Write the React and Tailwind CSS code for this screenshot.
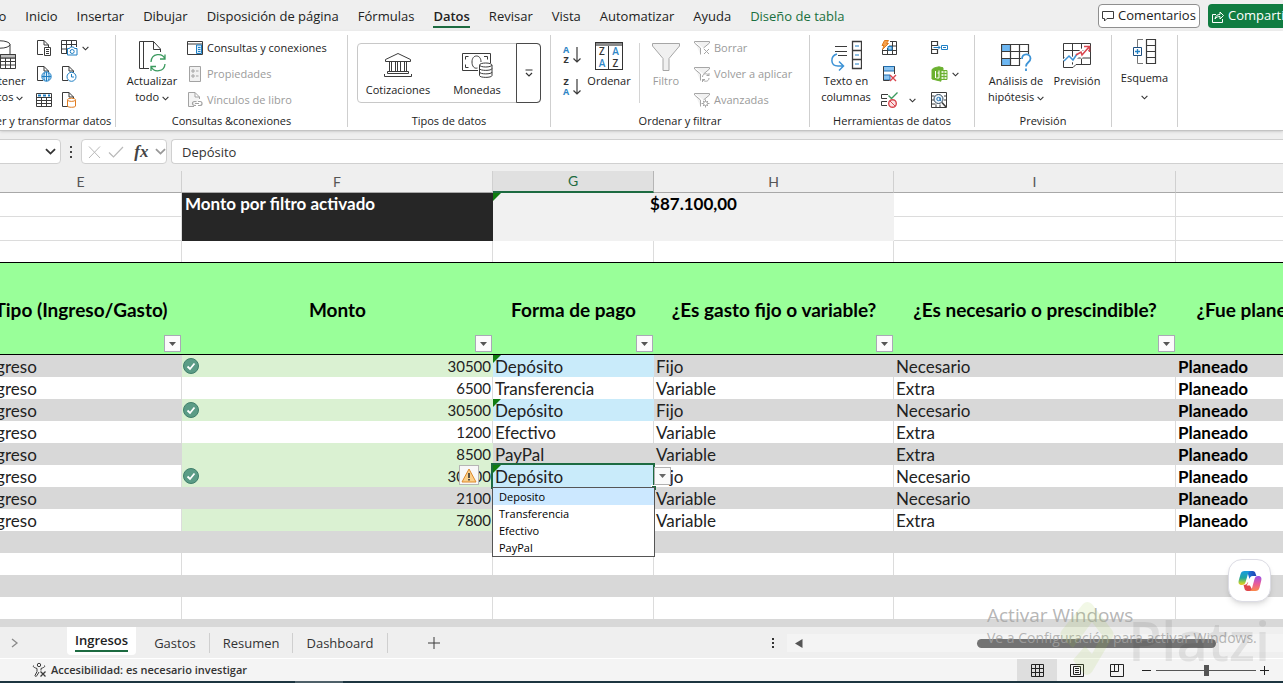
import React, { useState } from "react";

const UI = "font-['Open_Sans','Noto_Sans',sans-serif]";
const SHEET = "font-['Lato','Open_Sans',sans-serif]";

const MENU = ["Archivo", "Inicio", "Insertar", "Dibujar", "Disposición de página", "Fórmulas", "Datos", "Revisar", "Vista", "Automatizar", "Ayuda", "Diseño de tabla"];

const ROWS = [
  { monto: "30500", forma: "Depósito",      fijo: "Fijo",     need: "Necesario", ok: true },
  { monto: "6500",  forma: "Transferencia", fijo: "Variable", need: "Extra" },
  { monto: "30500", forma: "Depósito",      fijo: "Fijo",     need: "Necesario", ok: true },
  { monto: "1200",  forma: "Efectivo",      fijo: "Variable", need: "Extra" },
  { monto: "8500",  forma: "PayPal",        fijo: "Variable", need: "Extra" },
  { monto: "30500", forma: "Depósito",      fijo: "Fijo",     need: "Necesario", ok: true, selected: true },
  { monto: "2100",  forma: "",              fijo: "Variable", need: "Necesario" },
  { monto: "7800",  forma: "",              fijo: "Variable", need: "Extra" },
];

const HEADERS = ["Tipo (Ingreso/Gasto)", "Monto", "Forma de pago", "¿Es gasto fijo o variable?", "¿Es necesario o prescindible?", "¿Fue planeado o imprevisto?"];

/* ── Icons ── */

const Svg = ({ w = 16, h = 16, children }) => (
  <svg width={w} height={h} viewBox={`0 0 ${w} ${h}`} fill="none" stroke="#3b3b3b" className="shrink-0" aria-hidden="true">{children}</svg>
);

const Chevron = ({ w = 7, color = "#333" }) => (
  <svg width={w} height={w} viewBox="0 0 8 8" fill="none" stroke={color} strokeWidth="1.3" className="inline-block shrink-0" aria-hidden="true">
    <path d="M0.7 2.2 4 5.5 7.3 2.2" />
  </svg>
);

const PAGE = "M7 14.5H1.5V.5H8L12.5 5V7M8 .5V5H12.5";

const Ico = {
  database: (
    <Svg w={32} h={32}>
      <ellipse cx="12" cy="4.5" rx="10" ry="3.7" />
      <path d="M2 4.500V24c0 2 4 3.500 9 3.500M22 4.500V14" />
      <path d="M12.500 14.500h15v14h-15z" fill="#fff" />
      <path d="M12.500 18h15M12.500 21.500h15M12.500 25h15M17.500 18v10.500M22.500 18v10.500" />
      <path d="M12.500 14.500h15v3.500h-15z" fill="#bdbdbd" />
    </Svg>
  ),
  pageText: <Svg><path d={PAGE} /><path d="M8.500 7.500h6v8h-6z" fill="#fff" /><path d="M10 9.500h3M10 11.500h3M10 13.500h3" /></Svg>,
  pageWeb: (
    <Svg><path d={PAGE} /><circle cx="10.500" cy="10.500" r="4.700" fill="#d5ebfa" stroke="#1f7fc4" /><path stroke="#1f7fc4" d="M6 10.500h9M10.500 6v9.200M8.500 6.800c-.8 2.500-.8 5 0 7.500M12.500 6.800c.8 2.500.8 5 0 7.500" /></Svg>
  ),
  tableBlue: (
    <Svg><path d="M.5 1.500h15v13H.5zM.5 5.500h15M.5 8.500h15M.5 11.500h15M5.500 5.500v9M10.500 5.500v9" /><path stroke="#1f7fc4" strokeWidth="2" strokeDasharray="3 2" d="M2 3.500h12" /></Svg>
  ),
  camera: (
    <Svg w={17}>
      <path d="M6 13.500H.5v-13h15V7M.5 4.500h15M.5 9h5.500M5.500.5v13M10.500.5V7" />
      <path d="M6.500 8.500h2l1-1.500h3l1 1.500h2.500v6.500h-9.500z" fill="#fff" stroke="#1f7fc4" /><circle cx="11.200" cy="11.500" r="2" stroke="#1f7fc4" />
    </Svg>
  ),
  pageClock: <Svg><path d={PAGE} /><circle cx="10.500" cy="10.800" r="4.500" fill="#fff" stroke="#1f7fc4" /><path stroke="#1f7fc4" d="M10.500 8v3h2.500" /></Svg>,
  pageDb: (
    <Svg><path d={PAGE} /><path d="M6.500 8v6c0 1.700 8 1.700 8 0V8" fill="#fff" stroke="#e07b1d" /><ellipse cx="10.500" cy="7.800" rx="4" ry="1.600" fill="#fff" stroke="#e07b1d" /></Svg>
  ),
  refresh: (
    <Svg w={28} h={32}>
      <path d="M6 28.500H1.500V1.500H14" /><path d="M11 28.500H5.500V1.500H15.500L22.500 9V12M15.500 1.500V9.500H22.500" />
      <path stroke="#3c9a5f" strokeWidth="1.300" d="M13 22c.5-9 11.500-9.500 14-3M27 14.500v4.500h-5M27 24c-.5 8-11 9-14 2.500M13 31v-4.500h5" />
    </Svg>
  ),
  queries: (
    <Svg><path d="M.5 1.500h15v13H.5zM.5 4h15" /><path stroke="#1f7fc4" d="M9.500 5v8.500h5V5z" fill="#d5ebfa" /><path stroke="#1f7fc4" d="M11 7.500h2.500M11 9.500h2.500M11 11.500h2.500" /></Svg>
  ),
  props: <Svg><g stroke="#a3a3a3"><path d="M2.500.5h11v15h-11z" fill="#f1f1f1" /><path d="M5 4h2v2H5zM5 9h2v2H5zM9 5h2.500M9 10h2.500" /></g></Svg>,
  link: (
    <Svg><g stroke="#a3a3a3"><path d={PAGE} fill="#f4f4f4" /><path d="M5.500 11.500a2 2 0 0 1 2-2h2M9 13.500H7.500a2 2 0 0 1-2-2M11 9.500h2a2 2 0 0 1 0 4h-2M8 11.500h4" strokeWidth="1.200" /></g></Svg>
  ),
  bank: (
    <Svg w={28} h={26}>
      <path d="M1.500 7.500 14 1.500l12.500 6v2h-25zM3.500 21.500h21v-2h-21zM.5 24.500h27v-2.500M.5 24.500v-2.500" />
      <path d="M5.500 9.500v10M7.500 9.500v10M11.500 9.500v10M13.500 9.500v10M16.500 9.500v10M20.500 9.500v10M22.500 9.500v10" />
    </Svg>
  ),
  coins: (
    <Svg w={31} h={26}>
      <path d="M16 18.500H.5v-17h28V11M3.500 15.500v-3M3.500 7.500v-3h3M3.500 15.500h3M22 4.500h3.500v3" />
      <path d="M15.500 16c-3.500 1-5.500-2-5.500-6s2-6 4.500-6 4.500 2 4.500 6" />
      <path d="M17.500 13v10.500c0 2.500 12.500 2.500 12.500 0V13" fill="#fff" /><ellipse cx="23.700" cy="13" rx="6.200" ry="2" fill="#fff" />
      <path d="M17.500 16.500c0 2.500 12.500 2.500 12.500 0M17.500 20c0 2.500 12.500 2.500 12.500 0" />
    </Svg>
  ),
  filter: <Svg w={28} h={29}><path stroke="#a6a6a6" fill="#f0f0f0" d="M.5 1.500h27V4L17 16.500v12h-6v-12L.5 4z" /></Svg>,
  textCols: (
    <Svg w={32} h={32}>
      <path d="M5 6.500h12M5 11.500h12M8 15.500h9" /><path d="M22.500 1.500h9v27h-9zM22.500 10.500h9M22.500 19.500h9" strokeWidth="1.300" />
      <path stroke="#1f7fc4" d="M25 6h4M25 15h4M25 24h4" /><path stroke="#3d93d6" strokeWidth="1.500" d="M7 14c-7 2-7 12 1 12h5M9 21.500l4.500 4.500L9 30.500" />
    </Svg>
  ),
  flash: (
    <Svg><path d="M1.500 9v5.500h14V1.500H9M1.500 10.500h14M6.500 8v6.500M11.500 1.500v13M8 6h7.500" /><path fill="#9ccbf0" stroke="#1f7fc4" d="M7 6.500h4v3.500H7z" /><path fill="#f5a04c" stroke="#e07b1d" d="M3.500.5h4L5.500 3.500h2L1.500 9.500 3 5.500H1z" /></Svg>
  ),
  removeDup: (
    <Svg><path fill="#8cc5f2" stroke="#1f6fb2" d="M2.500.5h11v4.500h-11zM2.500 9h6.500v5h-6.500z" /><path d="M2.500.5v14h6M13.500.5V8" /><path stroke="#d9464f" strokeWidth="1.400" d="M9 9l6 6M15 9l-6 6" /></Svg>
  ),
  validate: (
    <Svg w={17}><path d="M7 2.500H.5v4H6M6 9.500H.5v4H6" /><path stroke="#3c9a5f" strokeWidth="1.400" d="M7.500 3.500l3 3 6-6" /><circle cx="11.500" cy="11.500" r="3.800" stroke="#d9464f" strokeWidth="1.400" fill="#fbe3e4" /><path stroke="#d9464f" d="M9 9l5 5" /></Svg>
  ),
  consolidate: (
    <Svg w={17}><path d="M.5 1.500h6v4h-6zM.5 9.500h6v4h-6zM.5 5.500v4" strokeWidth="1.200" /><path stroke="#1f7fc4" d="M2.500 7.500H9M7 5.500l2 2-2 2M10.500 5.500h6v4h-6zM12 7.500h3" /></Svg>
  ),
  model: (
    <Svg w={17}><path fill="#6bb130" stroke="#6bb130" d="M1 4Q1 2 8 .8l4 1V4L10 5v10.200L1 13z" /><path stroke="#fff" d="M4.500 5v7M8 4.500v7.500H5.500M6.500 7H8" /><path fill="#dff0d0" stroke="#6bb130" d="M10 4.500h6v9h-6zM10 7.500h6M10 10.500h6M13 4.500v9" /></Svg>
  ),
  dataSearch: (
    <Svg><path d="M.5.5h15v15H.5zM.5 4h3M.5 8h2.500M.5 12h4M5 12.500v3M9 12.500v3M13 4h2.500M13 8h2.500" /><circle cx="7.500" cy="7" r="4.500" fill="#eaf4fc" stroke="#33475b" /><circle cx="7.500" cy="7" r="1.700" stroke="#1f6fb2" /><path stroke="#1f6fb2" d="M9.200 5.500v3h1" /><path strokeWidth="1.500" d="M11 10.500l4 4.500" /></Svg>
  ),
  whatIf: (
    <Svg w={31} h={32}>
      <path fill="#6db7f2" stroke="none" d="M1 4h9v7H1zM1 18h9v7H1z" /><path d="M19 25.500H.5v-21h27V14M.5 11.500h27M.5 18.500H20M9.500 4.500v21M18.500 4.500v21" strokeWidth="1.200" />
      <path d="M20 15h10v17H20z" fill="#fff" stroke="none" /><path stroke="#3d93d6" strokeWidth="1.800" d="M21 19c0-6 8.500-6 8.500-.5 0 4-4.500 3.500-4.500 8M25 28.500v2.500" />
    </Svg>
  ),
  forecast: (
    <Svg w={29} h={28}>
      <path d="M7 25.500H.5V1.500h27v21H13l-3 3H6M.5 8.500h27M.5 16h27M9.500 1.500v21M18.500 1.500v21" />
      <path stroke="#fff" strokeWidth="4" d="M1 19l5-5 4 4 8-8 1 3 6-7" />
      <path stroke="#3d93d6" strokeWidth="1.500" d="M1 19l5-5 4 4 4-6" /><path stroke="#d9464f" strokeWidth="1.500" d="M13 13l5-3 1 3 7-8M21 4.500h5.500V10" />
    </Svg>
  ),
  outline: (
    <Svg w={25} h={27}>
      <path d="M14.500 1.500h9v24h-9zM14.500 7.500h9M14.500 13.500h9M14.500 19.500h9" strokeWidth="1.200" /><path stroke="#777" d="M11 1.500H5.500v8M5.500 17.500v8H11" />
      <path stroke="#1f4f7f" d="M1.500 9.500h8v8h-8z" /><path stroke="#1f7fc4" strokeWidth="1.300" d="M5.500 11v5M3 13.500h5" />
    </Svg>
  ),
};

const SmallFilter = ({ children }) => (
  <Svg><g stroke="#a6a6a6"><path fill="#f1f1f1" d="M.5 1.500h15V3L9.500 8M6.500 14.500V8L.5 3V1.500" />{children}</g></Svg>
);

const Check = () => (
  <svg width="16" height="16" viewBox="0 0 16 16" fill="none" aria-hidden="true">
    <circle cx="8" cy="8" r="7.500" fill="#5b9c86" stroke="#3f7f6b" />
    <path d="M4.500 8.500 7 11l4.500-5.500" stroke="#fff" strokeWidth="1.800" />
  </svg>
);

const Copilot = () => (
  <svg width="24" height="22" viewBox="0 0 24 22" aria-hidden="true">
    <defs>
      <linearGradient id="cpA" x1="0" y1="0" x2="0" y2="1"><stop offset="0" stopColor="#1a9be0" /><stop offset=".5" stopColor="#22a6a0" /><stop offset=".85" stopColor="#b5cf2f" /><stop offset="1" stopColor="#f2c52c" /></linearGradient>
      <linearGradient id="cpB" x1="0" y1="0" x2="0" y2="1"><stop offset="0" stopColor="#9a55e8" /><stop offset=".5" stopColor="#e75a9c" /><stop offset="1" stopColor="#fb8a4b" /></linearGradient>
      <linearGradient id="cpC" x1="0" y1="0" x2="1" y2="0"><stop offset="0" stopColor="#1f7de0" /><stop offset="1" stopColor="#1b3fae" /></linearGradient>
    </defs>
    <path fill="url(#cpC)" d="M9 1h5.500c2 0 2.600 1 3.100 2.700L18.400 6H15c-2 0-3 1-3.500 3z" />
    <path fill="url(#cpA)" d="M6.500 1H13c-2 0-2.600 1.500-3.200 3.500L7.600 12c-.6 2-1.500 3-3.600 3-3 0-4-1.700-3.200-4.800l1.700-6C3.200 2 4.300 1 6.500 1z" />
    <path fill="#e0484d" d="M15 21H9.500c-2 0-2.600-1-3.100-2.700L5.600 15C8 15 9 14 10 12z" />
    <path fill="url(#cpB)" d="M17.500 21H11c2 0 2.600-1.500 3.200-3.500L16.400 9.500c.6-2.500 1.500-3.500 3.600-3.500 3 0 4 1.700 3.200 4.800l-1.700 7c-.7 2.200-1.800 3.200-4 3.200z" />
    <path fill="#fff" d="M13.500 6.500h2.800L11.800 15.500H8.600z" />
  </svg>
);

/* ── Ribbon parts ── */

const Group = ({ label, className, children }) => (
  <section className={`flex h-[92px] shrink-0 flex-col border-r border-[#cfcfcf] ${className}`}>
    <div className="flex h-[78px] shrink-0">{children}</div>
    <div className="whitespace-nowrap text-center text-[11px] leading-4 text-[#222]">{label}</div>
  </section>
);

const Big = ({ icon, lines, chevron, disabled, className }) => (
  <button disabled={disabled} className={`flex shrink-0 flex-col items-center pt-1 text-[11px] leading-4 ${disabled ? "text-[#9b9b9b]" : "text-[#222]"} ${className}`}>
    <span className="flex h-[34px] items-center">{icon}</span>
    {lines.map((l, i) => (
      <span key={l} className="whitespace-nowrap">{l}{chevron && i === lines.length - 1 && <> <Chevron /></>}</span>
    ))}
  </button>
);

const Small = ({ icon, text, disabled }) => (
  <button disabled={disabled} className={`flex h-[26px] items-center gap-1 whitespace-nowrap text-[11px] ${disabled ? "text-[#9b9b9b]" : "text-[#222]"}`}>
    {icon}{text}
  </button>
);

const IconBtn = ({ icon, label, chevron, gap }) => (
  <button aria-label={label} className={`flex h-[26px] items-center ${gap || "gap-1"}`}>{icon}{chevron && <Chevron />}</button>
);

const SortIcon = ({ top, bottom, flip }) => (
  <span className="flex items-center gap-1">
    <span className={`flex flex-col text-[9px] font-bold leading-[10px] ${flip ? "text-[#333]" : "text-[#2f86c6]"}`}>
      <span>{top}</span><span className={flip ? "text-[#2f86c6]" : "text-[#333]"}>{bottom}</span>
    </span>
    <Svg w={8} h={18}><path d="M4 1v15M.5 12.500 4 16l3.500-3.500" strokeWidth="1.200" /></Svg>
  </span>
);

const SortBox = () => (
  <span className="grid h-7 w-7 grid-cols-2 border border-t-4 border-[#333] border-t-[#8a8a8a] text-center text-[10px] font-semibold leading-[11px] outline-1 -outline-offset-1 outline-[#333]">
    <span className="border-r border-[#333] text-[#333]">Z</span><span className="text-[#2f86c6]">A</span>
    <span className="border-r border-[#333] text-[#2f86c6]">A</span><span className="text-[#333]">Z</span>
  </span>
);

function Ribbon() {
  return (
    <div className="flex overflow-hidden border-b border-[#c4c4c4] bg-white pb-[3px] pt-1 shadow-sm">
      <Group label="Obtener y transformar datos" className="-ml-10 w-[156px]">
        <Big icon={Ico.database} lines={["Obtener", "datos"]} chevron className="ml-[17px] w-[54px]" />
        <div className="ml-[5px] flex flex-col">
          <IconBtn label="De texto o CSV" icon={Ico.pageText} />
          <IconBtn label="De la web" icon={Ico.pageWeb} />
          <IconBtn label="De una tabla o rango" icon={Ico.tableBlue} />
        </div>
        <div className="ml-[9px] flex flex-col">
          <IconBtn label="De imagen" icon={Ico.camera} chevron />
          <IconBtn label="Fuentes recientes" icon={Ico.pageClock} />
          <IconBtn label="Conexiones existentes" icon={Ico.pageDb} />
        </div>
      </Group>

      <Group label="Consultas &amp;conexiones" className="w-[232px]">
        <Big icon={Ico.refresh} lines={["Actualizar", "todo"]} chevron className="ml-[9px] w-[54px]" />
        <div className="ml-2 flex flex-col">
          <Small icon={Ico.queries} text="Consultas y conexiones" />
          <Small icon={Ico.props} text="Propiedades" disabled />
          <Small icon={Ico.link} text="Vínculos de libro" disabled />
        </div>
      </Group>

      <Group label="Tipos de datos" className="w-[203px]">
        <div className="mx-[9px] mt-2 flex h-[60px] flex-1 rounded border border-[#c8c8c8]">
          <Big icon={Ico.bank} lines={["Cotizaciones"]} className="w-[80px]" />
          <Big icon={Ico.coins} lines={["Monedas"]} className="w-[78px]" />
          <button aria-label="Más tipos de datos" className="-my-px -mr-px flex flex-1 items-center justify-center rounded-r border border-[#4a4a4a]">
            <svg width="8" height="8" viewBox="0 0 8 8" fill="none" stroke="#333" strokeWidth="1.200" aria-hidden="true"><path d="M.5 1h7M1 4l3 3 3-3" /></svg>
          </button>
        </div>
      </Group>

      <Group label="Ordenar y filtrar" className="w-[259px]">
        <div className="ml-3 flex w-[18px] flex-col gap-3 pt-[10px]">
          <button aria-label="Ordenar de A a Z"><SortIcon top="A" bottom="Z" /></button>
          <button aria-label="Ordenar de Z a A"><SortIcon top="Z" bottom="A" flip /></button>
        </div>
        <Big icon={<SortBox />} lines={["Ordenar"]} className="ml-[3px] w-[50px]" />
        <div className="ml-[5px] mt-2 h-[60px] border-l border-[#d4d4d4]" />
        <Big icon={Ico.filter} lines={["Filtro"]} disabled className="ml-[6px] w-10" />
        <div className="ml-2 flex flex-col">
          <Small icon={<SmallFilter><path d="M10 9l5 5M15 9l-5 5" /></SmallFilter>} text="Borrar" disabled />
          <Small icon={<SmallFilter><path d="M8.500 11c0-4 5-4 6.500-1.500V7M15 12c0 4-5 4-6.500 1.500V16M15 9.500h-2.500M8.500 13.500H11" /></SmallFilter>} text="Volver a aplicar" disabled />
          <Small icon={<SmallFilter><circle cx="11.500" cy="11.500" r="2" /><path d="M11.500 7.500v2M11.500 13.500v2M7.500 11.500h2M13.500 11.500h2M9 9l1 1M13 13l1 1M14 9l-1 1M10 13l-1 1" /></SmallFilter>} text="Avanzadas" disabled />
        </div>
      </Group>

      <Group label="Herramientas de datos" className="w-[165px]">
        <Big icon={Ico.textCols} lines={["Texto en", "columnas"]} className="ml-2 w-14" />
        <div className="ml-[7px] flex w-9 flex-col">
          <IconBtn label="Relleno rápido" icon={Ico.flash} />
          <IconBtn label="Quitar duplicados" icon={Ico.removeDup} />
          <IconBtn label="Validación de datos" icon={Ico.validate} chevron gap="gap-[11px]" />
        </div>
        <div className="ml-[14px] flex flex-col">
          <IconBtn label="Consolidar" icon={Ico.consolidate} />
          <IconBtn label="Modelo de datos" icon={Ico.model} chevron />
          <IconBtn label="Relaciones" icon={Ico.dataSearch} />
        </div>
      </Group>

      <Group label="Previsión" className="w-[137px]">
        <Big icon={Ico.whatIf} lines={["Análisis de", "hipótesis"]} chevron className="ml-[9px] w-16" />
        <Big icon={Ico.forecast} lines={["Previsión"]} className="ml-[3px] w-[52px]" />
      </Group>

      <Group label="" className="w-[66px]">
        <button className="flex flex-1 flex-col items-center pt-[3px] text-[11px] leading-4 text-[#222]">
          <span className="flex h-8 items-start">{Ico.outline}</span>
          <span>Esquema</span>
          <span className="pt-1 leading-none"><Chevron /></span>
        </button>
      </Group>
    </div>
  );
}

function FormulaBar() {
  return (
    <div className="flex items-start pb-[7px] pt-2 text-[13px]">
      <div className="-ml-1 flex h-[25px] w-[65px] items-center rounded border border-[#d0d0d0] bg-white">
        <input aria-label="Cuadro de nombres" className="w-12 outline-none" />
        <button aria-label="Abrir nombres" className="flex"><Chevron w={11} /></button>
      </div>
      <div className="flex h-[25px] w-5 flex-col items-center justify-center gap-[3px]">
        {[0, 1, 2].map(i => <span key={i} className="h-0.5 w-0.5 bg-[#444]" />)}
      </div>
      <div className="flex h-[25px] w-[86px] items-center justify-between rounded border border-[#d0d0d0] bg-white pl-[6px]">
        <button aria-label="Cancelar"><Svg w={13} h={14}><path stroke="#b9b9b9" d="M1 1.500l11 11.500M12 1.500 1 13" /></Svg></button>
        <button aria-label="Introducir"><Svg w={16} h={14}><path stroke="#b9b9b9" strokeWidth="1.200" d="M1 7.500 5.500 12 15 2" /></Svg></button>
        <button className="pl-1 font-['Liberation_Serif',serif] text-[17px] font-bold italic leading-5 text-[#444]">fx</button>
        <button aria-label="Más" className="flex"><Chevron w={11} color="#999" /></button>
      </div>
      <input aria-label="Barra de fórmulas" defaultValue="Depósito" className="ml-1 h-[25px] min-w-0 flex-1 rounded-l border border-r-0 border-[#d0d0d0] bg-white px-[10px] text-[#333] outline-none" />
    </div>
  );
}

/* ── Sheet ── */

const FilterButton = ({ label }) => (
  <button aria-label={label} className="absolute bottom-0.5 right-px flex h-[17px] w-[17px] items-center justify-center border border-[#a9a9b5] bg-[#fbfbfb]">
    <svg width="7" height="4" viewBox="0 0 7 4" aria-hidden="true"><path d="M0 0h7L3.500 4z" fill="#555" /></svg>
  </button>
);

const Corner = () => (
  <svg width="8" height="8" viewBox="0 0 8 8" className="absolute left-0 top-0" aria-hidden="true"><path d="M0 0h8L0 8z" fill="#107c10" /></svg>
);

function PaymentCell({ row, fill, picked, onPick }) {
  const blue = row.forma === "Depósito";
  return (
    <td className={`relative border-r pl-0.5 ${blue ? "border-transparent bg-[#c9ebfa]" : fill}`}>
      {blue && <Corner />}
      {row.forma}
      {row.selected && (
        <>
          <div className="absolute -bottom-0.5 -left-0.5 -right-0.5 -top-0.5 border-2 border-[#1d6b41]" />
          <span className="absolute -bottom-[3px] -right-[3px] h-[5px] w-[5px] border-l border-t border-white bg-[#1d6b41]" />
          <button aria-label="Error en la celda" className="absolute -left-[34px] top-0 flex h-5 w-5 items-center justify-center border border-[#b5b5b5] bg-[#f8f8f8]">
            <svg width="16" height="15" viewBox="0 0 16 15" aria-hidden="true"><path d="M8 1 15 14H1z" fill="#fbd08a" stroke="#dd8a2b" strokeLinejoin="round" /><path d="M8 5v5M8 11v1.500" stroke="#333" strokeWidth="1.600" /></svg>
          </button>
          <button aria-label="Abrir lista" className="absolute -right-[18px] top-0.5 flex h-[18px] w-[17px] items-center justify-center border border-[#b0b0b0] bg-[#fafafa]">
            <svg width="7" height="4" viewBox="0 0 7 4" aria-hidden="true"><path d="M0 0h7L3.500 4z" fill="#666" /></svg>
          </button>
          <ul role="listbox" className={`absolute -left-px -right-0.5 top-[22px] z-10 border border-[#555] bg-white text-[11px] leading-[17px] text-black ${UI}`}>
            {["Deposito", "Transferencia", "Efectivo", "PayPal"].map(o => (
              <li key={o} role="option" aria-selected={o === picked} onClick={() => onPick(o)}
                className={`cursor-default pl-[6px] ${o === picked ? "bg-[#cce8ff]" : ""}`}>{o}</li>
            ))}
          </ul>
        </>
      )}
    </td>
  );
}

function Sheet() {
  const [picked, setPicked] = useState("Deposito");
  const grid = "border-r border-b border-[#dcdcdc]";
  return (
    <table className={`-ml-5 w-max table-fixed border-separate border-spacing-0 bg-white text-[17px] leading-[21px] text-[#222] ${SHEET}`}>
      <colgroup>
        <col className="w-[202px]" /><col className="w-[311px]" /><col className="w-[161px]" />
        <col className="w-[240px]" /><col className="w-[282px]" /><col className="w-[280px]" />
      </colgroup>
      <thead>
        <tr className="h-[22px] text-[14px] leading-5 text-[#555]">
          {["E", "F", "G", "H", "I", "J"].map(c => (
            <th key={c} scope="col" className={`border-r p-0 font-normal ${c === "G" ? "border-b-2 border-b-[#1d6b41] border-r-[#b5b5b5] bg-[#e0e0e0] text-[#1d6b41]" : "border-b border-b-[#a8a8a8] border-r-[#d0d0d0] bg-[#efefef]"}`}>{c}</th>
          ))}
        </tr>
      </thead>
      <tbody>
        <tr className="h-6 align-top font-bold">
          <td className={grid} />
          <td rowSpan={2} className="bg-[#262626] px-[3px] text-white">Monto por filtro activado</td>
          <td rowSpan={2} colSpan={2} className="relative bg-[#f1f1f1] text-center text-black"><Corner />$87.100,00</td>
          <td className={grid} /><td className={grid} />
        </tr>
        <tr className="h-6"><td className={grid} /><td className={grid} /><td className={grid} /></tr>
        <tr className="h-[21px]">{[0, 1, 2, 3, 4, 5].map(i => <td key={i} className="border-r border-[#dcdcdc] p-0" />)}</tr>
        <tr className="h-[93px] text-[19px] text-black">
          {HEADERS.map(h => (
            <th key={h} className="relative whitespace-nowrap border-y border-black bg-[#99ff99] p-0 pt-0.5 font-bold">
              {h}<FilterButton label={`Filtrar ${h}`} />
            </th>
          ))}
        </tr>
        {ROWS.map((r, i) => {
          const fill = i % 2 ? "border-[#dcdcdc] bg-white" : "border-transparent bg-[#d8d8d8]";
          return (
            <tr key={i} className="h-[22px]">
              <td className={`border-r p-0 pl-0.5 ${fill}`}>Ingreso</td>
              <td className={`border-r p-0 ${Number(r.monto) > 7000 ? "border-transparent bg-[#daf1d2]" : fill}`}>
                <div className="flex items-center justify-end px-px text-[15px]">
                  {r.ok && <span className="mr-auto"><Check /></span>}
                  {r.monto}
                </div>
              </td>
              <PaymentCell row={r} fill={fill} picked={picked} onPick={setPicked} />
              <td className={`border-r p-0 pl-0.5 ${fill}`}>{r.fijo}</td>
              <td className={`border-r p-0 pl-0.5 ${fill}`}>{r.need}</td>
              <td className={`border-r p-0 pl-0.5 font-bold text-black ${fill}`}>Planeado</td>
            </tr>
          );
        })}
        {[0, 1, 2, 3, 4].map(n => (
          <tr key={n} className="h-[22px]">
            {[0, 1, 2, 3, 4, 5].map(c => <td key={c} className={`border-r p-0 ${n % 2 ? "border-[#dcdcdc] bg-white" : "border-transparent bg-[#d8d8d8]"}`} />)}
          </tr>
        ))}
      </tbody>
    </table>
  );
}

function SheetTabs() {
  const [active, setActive] = useState("Ingresos");
  return (
    <div className="flex h-[32px] items-start border-b border-white bg-[#efefef] text-[13px] text-[#333]">
      <button aria-label="Hoja siguiente" className="ml-[11px] mr-12 flex h-8 items-center">
        <Svg w={8} h={10}><path stroke="#8a8a8a" strokeWidth="1.300" d="M1 1l5 4-5 4" /></Svg>
      </button>
      {["Ingresos", "Gastos", "Resumen", "Dashboard"].map(t => t === active ? (
        <button key={t} className="mr-[5px] h-7 rounded-b bg-white px-2 font-semibold text-[#222]">
          <span className="block border-b-2 border-[#1d6b41] leading-5">{t}</span>
        </button>
      ) : (
        <button key={t} onClick={() => setActive(t)} className="mt-[6px] h-5 border-r border-[#cfcfcf] px-[13px] leading-5">{t}</button>
      ))}
      <button aria-label="Hoja nueva" className="ml-10 flex h-8 items-center"><Svg w={12} h={12}><path d="M6 0v12M0 6h12" /></Svg></button>
      <div className="ml-auto flex h-8 w-2/5 items-center">
        <div className="mr-[13px] flex flex-col gap-0.5 pl-0.5">{[0, 1, 2].map(i => <span key={i} className="h-0.5 w-0.5 bg-[#333]" />)}</div>
        <div className="flex h-[18px] flex-1 items-center bg-[#f4f4f4] pl-2">
          <svg width="8" height="9" viewBox="0 0 8 9" aria-hidden="true"><path d="M7.500 0v9L0 4.500z" fill="#555" /></svg>
          <div className="ml-auto mr-[67px] h-[9px] w-[49%] rounded-full bg-[#737373]" />
        </div>
      </div>
    </div>
  );
}

function StatusBar() {
  return (
    <div className="flex h-[22px] items-center bg-[#f4f4f4] pl-8 text-[11px] font-semibold text-[#333]">
      <Svg w={16} h={16}>
        <circle cx="7" cy="3" r="1.700" /><path d="M1.500 3.500c-1 1 .5 2 3.500 3v3L3 13.500c0 1 1 1.300 1.800.3L7 10M12.500 3.500c1 1-.5 2-3.500 3v2" /><path d="M8.500 9.500l5 5M13.500 9.500l-5 5" strokeWidth="1.300" />
      </Svg>
      <span className="ml-[3px]">Accesibilidad: es necesario investigar</span>
      <div className="ml-auto flex h-full items-center pr-[14px]">
        <button aria-label="Normal" className="flex h-full w-10 items-center justify-center bg-[#dedede]"><Svg w={13} h={13}><path d="M.5.500h12v12H.5zM.5 4.500h12M.5 8.500h12M4.500.500v12M8.500.500v12" stroke="#222" /></Svg></button>
        <button aria-label="Diseño de página" className="flex h-full w-10 items-center justify-center"><Svg w={14} h={13}><path d="M.5.500h13v12H.5zM3.500 2.500h7v8h-7zM5 4.500h4M5 6.500h4M5 8.500h4" stroke="#222" /></Svg></button>
        <button aria-label="Vista previa de salto de página" className="flex h-full w-10 items-center justify-center"><Svg w={14} h={13}><path d="M.5.500h13v12H.5zM.5 7.500h8V.500M4.500.500v7" stroke="#222" /></Svg></button>
        <button aria-label="Alejar" className="ml-[5px] mr-[5px] flex"><Svg w={9} h={9}><path d="M0 4.500h9" stroke="#222" /></Svg></button>
        <input type="range" aria-label="Zoom" defaultValue="51" className="h-px w-[100px] appearance-none bg-[#555] [&::-webkit-slider-thumb]:h-[11px] [&::-webkit-slider-thumb]:w-[5px] [&::-webkit-slider-thumb]:appearance-none [&::-webkit-slider-thumb]:bg-[#555]" />
        <button aria-label="Acercar" className="ml-1 flex"><Svg w={9} h={9}><path d="M0 4.500h9M4.500 0v9" stroke="#222" /></Svg></button>
      </div>
    </div>
  );
}

export default function App() {
  return (
    <div className={`relative flex h-screen flex-col overflow-hidden bg-[#efefef] ${UI}`}>
      <header className="flex h-[31px] items-start justify-between text-[13px] text-[#222]">
        <nav className="-ml-[39px] flex gap-[19px] pt-[6px] leading-5">
          {MENU.map(m => (
            <a key={m} href="#" className={`whitespace-nowrap ${m === "Datos" ? "border-b-2 border-[#1d6b41] font-semibold" : m === "Diseño de tabla" ? "text-[#1a7040]" : ""}`}>{m}</a>
          ))}
        </nav>
        <div className="-mr-[15px] flex shrink-0 gap-2 pt-1">
          <button className="flex h-6 w-[102px] items-center justify-center gap-1 rounded border border-[#8f8f8f] bg-white">
            <Svg w={12} h={12}><path d="M.5 1.500h11v7H5L2.500 11V8.500h-2z" /></Svg>Comentarios
          </button>
          <button className="flex h-6 w-[90px] items-center gap-1 rounded bg-[#107c41] pl-1 text-white">
            <Svg w={12} h={13}><path stroke="#fff" d="M4 4.500H.5v8h10V9M3 9c.5-3 2-4.500 5-4.500V2l3.500 3.500L8 9V6.500C6 6.500 4.500 7 3 9z" /></Svg>Compartir
          </button>
        </div>
      </header>
      <Ribbon />
      <FormulaBar />
      <main className="min-h-0 flex-1 overflow-hidden"><Sheet /></main>
      <SheetTabs />
      <StatusBar />
      <div className="flex h-0.5 bg-[#1c3540]"><span className="ml-[23%] w-12 bg-[#4d6069]" /></div>

      <button aria-label="Copilot" className="absolute bottom-[81px] right-3 flex h-[43px] w-[43px] items-center justify-center rounded-[14px] border border-[#dcdce4] bg-white shadow-md"><Copilot /></button>

      {/* Watermarks over the page */}
      <div className="pointer-events-none absolute bottom-9 right-[21px] w-[275px] whitespace-nowrap text-[#a3a3a3]/80">
        <p className="text-[19px] leading-7">Activar Windows</p>
        <p className="text-[14px] leading-[18px]">Ve a Configuración para activar Windows.</p>
      </div>
      <div className="pointer-events-none absolute bottom-0.5 right-[13px] flex items-center gap-[13px]">
        <svg width="56" height="80" viewBox="0 0 56 80" aria-hidden="true">
          <path d="M33 4 53 30Q56 34 53 38L33 72Q28 78 23 72L14 60 26 46 33 54 43 35 33 22 14 48 3 38Q0 34 3 30L24 4Q28 0 33 4z" fill="#98ca3f" fillOpacity=".13" />
        </svg>
        <span className="text-[54px] font-semibold leading-[82px] text-black/8">Platzi</span>
      </div>
    </div>
  );
}
